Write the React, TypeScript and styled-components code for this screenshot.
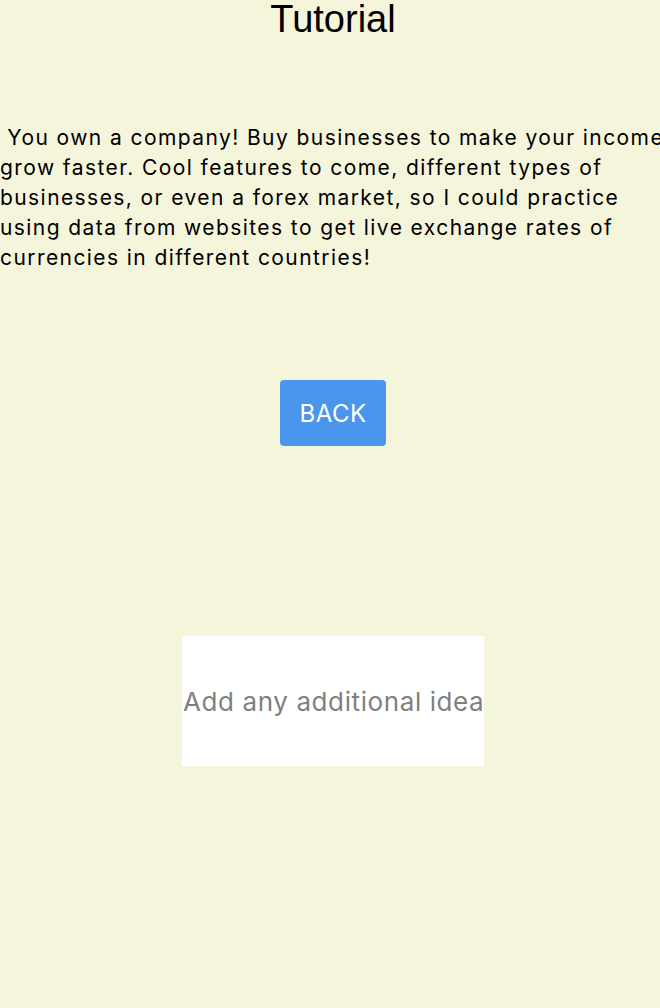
import React from "react";
import styled, { createGlobalStyle } from "styled-components";

const Global = createGlobalStyle`
  html, body { margin: 0; padding: 0; background: #f5f5dc; }
  body { overflow: hidden; }
  #root { width: 660px; height: 1008px; overflow: hidden; }
`;

const Screen = styled.div`
  width: 666px;
  height: 1008px;
  display: flex;
  flex-direction: column;
  align-items: center;
  background: #f5f5dc;
  font-family: Inter, "Liberation Sans", sans-serif;
  color: #000;
`;

const Title = styled.h1`
  margin: 0;
  font-family: "Liberation Sans", Arial, sans-serif;
  font-weight: 400;
  font-size: 38px;
  line-height: 38px;
  text-align: center;
`;

const Body = styled.p`
  align-self: stretch;
  margin: 85px 0 0 0;
  font-size: 21px;
  line-height: 30px;
  letter-spacing: 1.42px;
  white-space: pre-wrap;
`;

const BackButton = styled.button`
  margin-top: 107px;
  width: 106px;
  height: 66px;
  border: none;
  border-radius: 4px;
  background: #4a96ec;
  color: #fff;
  font-family: Inter, "Liberation Sans", sans-serif;
  font-size: 24px;
  letter-spacing: 0.5px;
  padding: 0;
`;

const IdeaInput = styled.input`
  margin-top: 190px;
  width: 302px;
  height: 130px;
  box-sizing: border-box;
  border: none;
  outline: none;
  background: #fff;
  padding: 0 0 0 1px;
  font-family: Inter, "Liberation Sans", sans-serif;
  font-size: 26px;
  letter-spacing: 0.6px;
  color: #000;
  &::placeholder { color: #7f7f7f; }
`;

export default function App() {
  return (
    <Screen>
      <Global />
      <Title>Tutorial</Title>
      <Body>
        {" You own a company! Buy businesses to make your income grow faster. Cool features to come, different types of businesses, or even a forex market, so I could practice using data from websites to get live exchange rates of currencies in different countries!"}
      </Body>
      <BackButton>BACK</BackButton>
      <IdeaInput placeholder="Add any additional ideas" />
    </Screen>
  );
}
